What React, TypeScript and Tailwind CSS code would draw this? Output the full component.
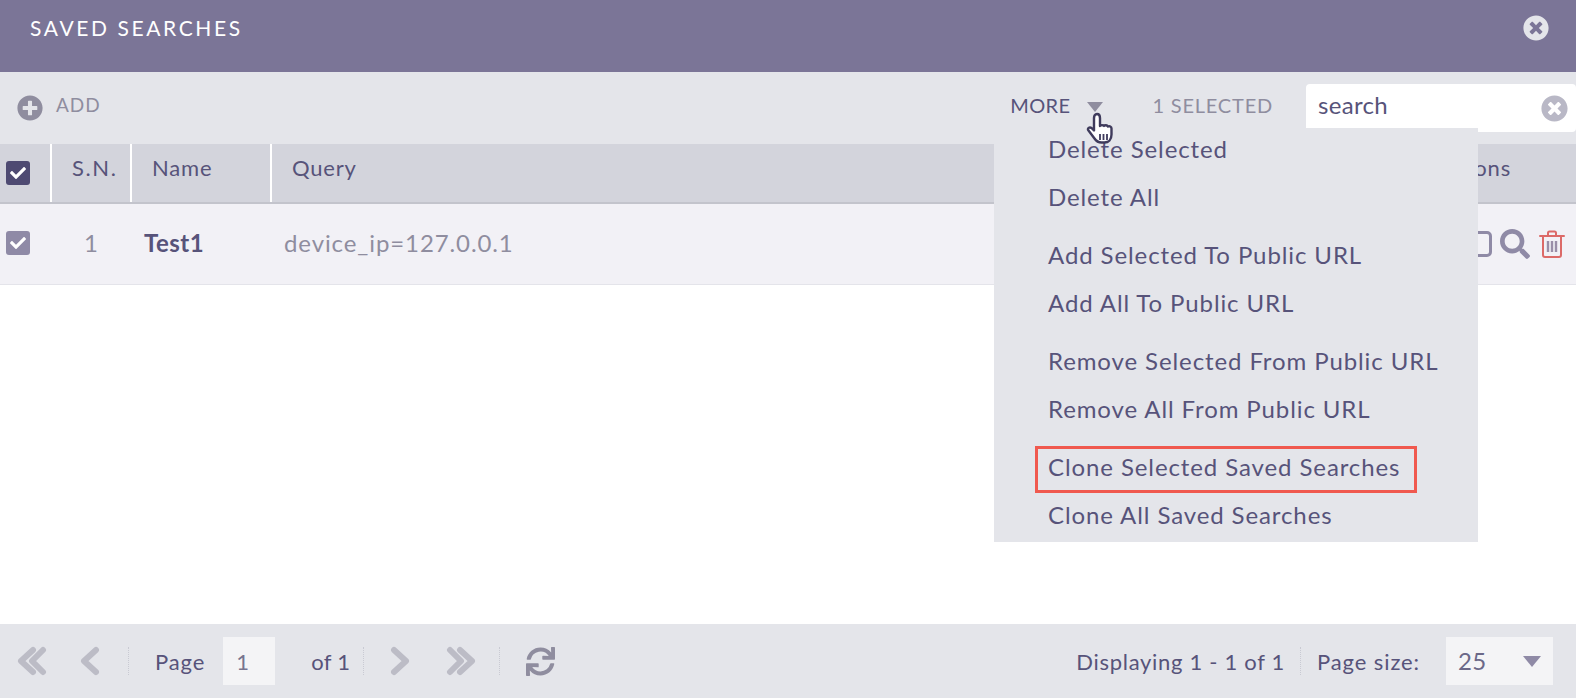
import { FaPlusCircle, FaTimesCircle, FaCheck, FaSearch, FaSync } from "react-icons/fa";

const Check: React.FC<{ color: string }> = ({ color }) => (
  <span className={`w-6 h-6 rounded-[3px] flex items-center justify-center ${color}`}>
    <FaCheck size={16} className="text-white" />
  </span>
);

const HeadCell: React.FC<{ className: string; children?: React.ReactNode }> = ({ className, children }) => (
  <div className={`h-full flex items-center border-r-[2px] border-white ${className}`}>{children}</div>
);

const Sep = () => <span className="block w-px h-7 border-l border-dotted border-[#c9cad3]" />;

const Caret: React.FC<{ className: string; w: number; h: number }> = ({ className, w, h }) => (
  <svg width={w} height={h} viewBox="0 0 18 11" className={className}>
    <path d="M0 0h18L9 11z" fill="currentColor" />
  </svg>
);

// pager chevrons, thick with round ends
const Chevrons: React.FC<{ dir: "left" | "right"; double?: boolean; className: string }> = ({ dir, double, className }) => (
  <svg width={double ? 31 : 21} height="30" viewBox={double ? "0 0 31 30" : "0 0 21 30"} className={`text-[#bcbcc6] ${className}`} style={{ transform: dir === "right" ? "scaleX(-1)" : undefined }}>
    <g fill="none" stroke="currentColor" strokeWidth="6" strokeLinecap="round" strokeLinejoin="round">
      <path d="M17 4 5 15l12 11" />
      {double && <path d="M27 4 16 15l11 11" />}
    </g>
  </svg>
);

const TrashIcon = () => (
  <svg width="26" height="28" viewBox="0 0 26 28" fill="none" stroke="#dc6a68" strokeWidth="2" strokeLinecap="round">
    <path d="M1 6h24" />
    <path d="M9 6V3a1.5 1.5 0 0 1 1.5-1.5h5A1.5 1.5 0 0 1 17 3v3" />
    <path d="M4 6v19a2 2 0 0 0 2 2h14a2 2 0 0 0 2-2V6" />
    <path d="M9 11v11M13 11v11M17 11v11" strokeWidth="2.4" stroke="#9a8fa8" strokeLinecap="butt" />
  </svg>
);

const HandCursor: React.FC<{ className: string }> = ({ className }) => (
  <svg width="32" height="34" viewBox="0 0 32 34" className={className} fill="#fff" stroke="#3f3b5c" strokeWidth="2.4" strokeLinejoin="round" strokeLinecap="round">
    <path d="M11 3c2 0 3 2 3 4v8c1-1 3-1 4 0 1-1 3-1 4 .5 1.500-.8 3.500 0 3.500 2v6c0 5-3 8-7 8h-3c-3 0-5-1-7-4l-6-8c-1.500-2 1-4 3-2.500l2.500 2.500V7c0-2 1-4 3-4z" />
    <path d="M14 23v6M17.500 23v6M21 23v6" strokeWidth="1.800" strokeLinecap="butt" />
  </svg>
);

const menuGroups = [
  ["Delete Selected", "Delete All"],
  ["Add Selected To Public URL", "Add All To Public URL"],
  ["Remove Selected From Public URL", "Remove All From Public URL"],
  ["Clone Selected Saved Searches", "Clone All Saved Searches"],
];

export default function App() {
  return (
    <div className="w-[1576px] h-[698px] bg-white flex flex-col relative overflow-hidden font-['Lato',sans-serif] text-[#57537a]">
      <div className="h-[72px] shrink-0 bg-[#7b7597] flex items-center justify-between pl-[30px] pr-[27px] pb-[2px]">
        <span className="text-white text-[21px] tracking-[2.6px] pb-[15px]">SAVED SEARCHES</span>
        <FaTimesCircle size={26} className="text-[#e4e5ea] mb-[15px]" />
      </div>

      <div className="h-[72px] shrink-0 bg-[#e4e5ea] flex items-center justify-between pl-[17px]">
        <div className="flex items-center gap-[13px] text-[#8f8d9f] text-[19px] tracking-[1px] pb-[6px]">
          <FaPlusCircle size={26} className="mt-[6px]" />
          <span>ADD</span>
        </div>
        <div className="flex items-center h-full">
          <span className="text-[20px] tracking-[0.4px] pb-[7px]">MORE</span>
          <Caret w={16} h={10} className="ml-[17px] text-[#8f8d9f] mb-[2px]" />
          <span className="ml-[49px] text-[20px] tracking-[0.8px] text-[#8f8d9f] pb-[7px]">1 SELECTED</span>
          <div className="ml-[33px] w-[270px] h-[48px] bg-white rounded-[4px] flex items-center justify-between pl-[12px] pr-[8px] text-[24px] tracking-[0.3px]">
            <span className="pb-[7px]">search</span>
            <FaTimesCircle size={27} className="text-[#b9b8c6]" />
          </div>
        </div>
      </div>

      <div className="h-[60px] shrink-0 bg-[#d3d4dc] border-b-[2px] border-[#c3c4cc] flex items-center text-[22px] tracking-[0.8px]">
        <HeadCell className="w-[52px] pl-[6px]">
          <Check color="bg-[#4e4a72]" />
        </HeadCell>
        <HeadCell className="w-[80px] pl-[20px] pb-[12px]"><span className="tracking-[1.6px]">S.N.</span></HeadCell>
        <HeadCell className="w-[140px] pl-[20px] pb-[12px]">Name</HeadCell>
        <div className="flex-1 pl-[20px] pb-[12px]">Query</div>
        <div className="pr-[65px] pb-[12px]">Actions</div>
      </div>

      <div className="h-[81px] shrink-0 bg-[#f2f1f6] border-b border-[#e4e4ea] flex items-center text-[24px] tracking-[0.9px]">
        <div className="w-[52px] pl-[6px] pb-[3px]">
          <Check color="bg-[#8f8aa6]" />
        </div>
        <div className="w-[80px] text-center pr-[1px] text-[#8f8d9f] pb-[3px]">1</div>
        <div className="w-[139px] pl-[12px] font-bold pb-[3px] tracking-[0.5px]">Test1</div>
        <div className="flex-1 pl-[13px] text-[#8f8d9f] pb-[3px]">device_ip=127.0.0.1</div>
        <div className="flex items-center pr-[11px]">
          <span className="w-[26px] h-[26px] rounded-[5px] border-[3px] border-[#8f8aa6] mr-[8px]" />
          <FaSearch size={30} className="text-[#8f8aa6] mr-[9px]" />
          <TrashIcon />
        </div>
      </div>

      <div className="flex-1" />

      <div className="h-[74px] shrink-0 bg-[#e4e5ea] flex items-center justify-between text-[22px] tracking-[0.3px] pl-[16px] pr-[23px]">
        <div className="flex items-center">
          <Chevrons dir="left" double className="" />
          <Chevrons dir="left" className="ml-[32px]" />
          <span className="ml-[28px]"><Sep /></span>
          <span className="ml-[26px] tracking-[0.9px]">Page</span>
          <span className="ml-[18px] w-[52px] h-[48px] bg-[#f4f4f6] flex items-center pl-[13px] text-[#77748f]">1</span>
          <span className="ml-[36px]">of 1</span>
          <span className="ml-[13px]"><Sep /></span>
          <Chevrons dir="right" className="ml-[26px]" />
          <Chevrons dir="right" double className="ml-[35px]" />
          <span className="ml-[22px]"><Sep /></span>
          <FaSync size={29} className="ml-[26px] text-[#8f8d9f]" />
        </div>
        <div className="flex items-center">
          <span className="tracking-[0.7px]">Displaying 1 - 1 of 1</span>
          <span className="ml-[15px]"><Sep /></span>
          <span className="ml-[16px] tracking-[0.9px]">Page size:</span>
          <div className="ml-[26px] w-[107px] h-[48px] bg-[#f4f4f6] flex items-center justify-between pl-[12px] pr-[12px]">
            <span className="text-[24px] text-[#6b6888]">25</span>
            <Caret w={18} h={11} className="text-[#8f8aa6]" />
          </div>
        </div>
      </div>

      {/* dropdown from MORE, lies over the table */}
      <div className="absolute left-[994px] top-[128px] w-[484px] h-[414px] bg-[#e4e5ea] pl-[54px] text-[24px] tracking-[0.9px] leading-[48px]">
        <div className="-mt-[3px]">
          {menuGroups.map(items => (
            <div key={items[0]} className="mb-[10px]">
              {items.map(item => (
                <div key={item} className="whitespace-nowrap">{item}</div>
              ))}
            </div>
          ))}
        </div>
      </div>
      <div className="absolute left-[1035px] top-[446px] w-[382px] h-[47px] border-[3px] border-[#f0594f]" />
      <HandCursor className="absolute left-[1086px] top-[111px]" />
    </div>
  );
}
